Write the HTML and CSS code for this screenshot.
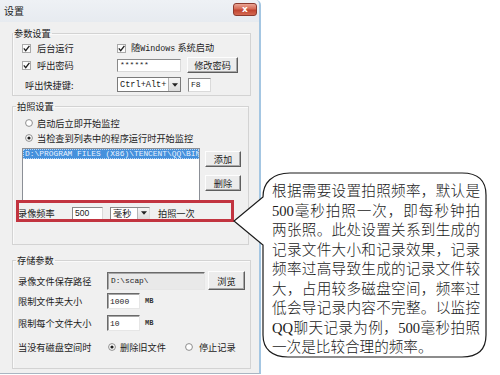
FILE: index.html
```html
<!DOCTYPE html>
<html>
<head>
<meta charset="utf-8">
<link rel="stylesheet" href="styles.css">
</head>
<body>
<div class="page">
  <div class="window">
    <div class="titlebar">
      <span class="title">设置</span>
      <span class="close">x</span>
    </div>

    <fieldset class="group g1">
      <legend>参数设置</legend>
      <div class="inner">
        <div class="row r1">
          <div class="c1"><svg class="chk" viewBox="0 0 9 9"><rect x="0.5" y="0.5" width="8" height="8" fill="#fbfbfb" stroke="#a9a9a9"/><path d="M1.8 4.4 L3.7 6.6 L7.4 1.8" fill="none" stroke="#1e1e1e" stroke-width="1.3"/></svg><span>后台运行</span></div>
          <div class="c2"><svg class="chk" viewBox="0 0 9 9"><rect x="0.5" y="0.5" width="8" height="8" fill="#fbfbfb" stroke="#a9a9a9"/><path d="M1.8 4.4 L3.7 6.6 L7.4 1.8" fill="none" stroke="#1e1e1e" stroke-width="1.3"/></svg><span>随<span class="mono win">Windows</span> 系统启动</span></div>
        </div>
        <div class="row r2">
          <div class="c1"><svg class="chk" viewBox="0 0 9 9"><rect x="0.5" y="0.5" width="8" height="8" fill="#fbfbfb" stroke="#a9a9a9"/><path d="M1.8 4.4 L3.7 6.6 L7.4 1.8" fill="none" stroke="#1e1e1e" stroke-width="1.3"/></svg><span>呼出密码</span></div>
          <div class="field pw mono">******</div>
          <div class="btn btn-mod">修改密码</div>
        </div>
        <div class="row r3">
          <div class="c1 lbl-key">呼出快捷键:</div>
          <div class="combo cb-key"><span class="mono">Ctrl+Alt+</span><span class="arrow"><svg viewBox="0 0 7 4"><path d="M0 0 H7 L3.5 4 Z" fill="#222"/></svg></span></div>
          <div class="field f8 mono">F8</div>
        </div>
      </div>
    </fieldset>

    <fieldset class="group g2">
      <legend>拍照设置</legend>
      <div class="inner">
        <div class="row rr1"><svg class="rad" viewBox="0 0 8 8"><circle cx="4" cy="4" r="3.4" fill="#fff" stroke="#8d8d8d"/></svg><span>启动后立即开始监控</span></div>
        <div class="row rr2"><svg class="rad" viewBox="0 0 8 8"><circle cx="4" cy="4" r="3.4" fill="#fff" stroke="#8d8d8d"/><circle cx="4" cy="4" r="1.6" fill="#1e1e1e"/></svg><span>当检查到列表中的程序运行时开始监控</span></div>
        <div class="listrow">
          <div class="list">
            <div class="sel mono">D:\PROGRAM FILES (X86)\TENCENT\QQ\BIN</div>
          </div>
          <div class="listbtns">
            <div class="btn btn-add">添加</div>
            <div class="btn btn-del">删除</div>
          </div>
        </div>
        <div class="row freq">
          <div class="lbl-freq">录像频率</div>
          <div class="field v500">500</div>
          <div class="combo cb-ms"><span>毫秒</span><span class="arrow"><svg viewBox="0 0 7 4"><path d="M0 0 H7 L3.5 4 Z" fill="#222"/></svg></span></div>
          <div class="once">拍照一次</div>
        </div>
      </div>
    </fieldset>

    <fieldset class="group g3">
      <legend>存储参数</legend>
      <div class="inner">
        <div class="row s1">
          <div class="lbl3">录像文件保存路径</div>
          <div class="field sunken path mono">D:\scap\</div>
          <div class="btn btn-browse">浏览</div>
        </div>
        <div class="row s2">
          <div class="lbl3">限制文件夹大小</div>
          <div class="field sunken num mono">1000</div>
          <div class="mb mono">MB</div>
        </div>
        <div class="row s3">
          <div class="lbl3">限制每个文件大小</div>
          <div class="field sunken num mono">10</div>
          <div class="mb mono">MB</div>
        </div>
        <div class="row s4">
          <div class="lbl3">当没有磁盘空间时</div>
          <svg class="rad rad-del" viewBox="0 0 8 8"><circle cx="4" cy="4" r="3.4" fill="#fff" stroke="#8d8d8d"/><circle cx="4" cy="4" r="1.6" fill="#1e1e1e"/></svg><span>删除旧文件</span>
          <svg class="rad rad-stop" viewBox="0 0 8 8"><circle cx="4" cy="4" r="3.4" fill="#fff" stroke="#8d8d8d"/></svg><span>停止记录</span>
        </div>
      </div>
    </fieldset>
  </div>

  <svg class="overlay" width="500" height="375" viewBox="0 0 500 375">
    <rect x="17.5" y="201.5" width="215" height="19" fill="none" stroke="#c23440" stroke-width="3"/>
    <path d="M263 197 C263 183 272 173 290 173 L462 173 C478 173 486 181 486 195 L486 335 C486 349 478 357 462 357 L288 357 C272 357 263 349 263 335 L263 245 L234 221 Z" fill="#fff" stroke="#1a1a1a" stroke-width="1.2"/>
  </svg>

  <div class="note">
    <div class="ln">根据需要设置拍照频率，默认是</div>
    <div class="ln">500毫秒拍照一次，即每秒钟拍</div>
    <div class="ln">两张照。此处设置关系到生成的</div>
    <div class="ln">记录文件大小和记录效果，记录</div>
    <div class="ln">频率过高导致生成的记录文件较</div>
    <div class="ln">大，占用较多磁盘空间，频率过</div>
    <div class="ln">低会导记录内容不完整。以监控</div>
    <div class="ln">QQ聊天记录为例，500毫秒拍照</div>
    <div class="ln last">一次是比较合理的频率。</div>
  </div>
</div>
</body>
</html>
```

FILE: styles.css
```css
html, body {
  margin: 0;
  padding: 0;
  background: #ffffff;
}

.page {
  position: relative;
  width: 500px;
  height: 375px;
  overflow: hidden;
  font-family: "Noto Sans CJK SC", sans-serif;
  font-size: 9.2px;
  line-height: 12px;
  color: #1c1c1c;
}

.mono {
  font-family: "Liberation Mono", "Noto Sans CJK SC", monospace;
}

.window {
  width: 261px;
  height: 374px;
  box-sizing: border-box;
  background: #f0f0f0;
  border-right: 2px solid #a4c6e2;
  border-bottom: 1px solid #a9b6c2;
  border-top-right-radius: 5px;
  display: flex;
  flex-direction: column;
}

.titlebar {
  height: 22px;
  flex: none;
  display: flex;
  align-items: center;
  padding: 0 2px 0 4px;
  background: linear-gradient(#eef1f5, #e7ebf0);
  border-top-right-radius: 5px;
}

.title {
  font-size: 10px;
  color: #222;
  margin-top: -1px;
}

.close {
  margin-left: auto;
  margin-top: -4px;
  width: 24px;
  height: 13px;
  box-sizing: border-box;
  border: 1px solid #8c3a2e;
  border-radius: 3px;
  background: linear-gradient(#eaa595, #d56a55 45%, #c0432f 55%, #d46a52);
  color: #fff;
  font-family: "DejaVu Sans", sans-serif;
  font-weight: bold;
  font-size: 9px;
  line-height: 10px;
  text-align: center;
}

/* group boxes */
.group {
  margin: 0 0 0 12px;
  padding: 0;
  border: 1px solid #d3d3d3;
  box-shadow: 1px 1px 0 #fafafa inset;
  min-width: 0;
  box-sizing: border-box;
}

.group legend {
  padding: 0 1px;
  margin-left: 2px;
  font-size: 9.2px;
  line-height: 12px;
}

.inner {
  display: flex;
  flex-direction: column;
}

.row {
  display: flex;
  align-items: center;
  flex: none;
}

.g1 {
  width: 239px;
  margin-top: 5px;
}
.g1 .inner {
  padding: 0 0 3px 9px;
}
.g1 legend { margin-left: 0; }

.c1 {
  width: 95px;
  display: flex;
  align-items: center;
}
.c2 {
  display: flex;
  align-items: center;
}
.chk {
  width: 9px;
  height: 9px;
  flex: none;
  margin-right: 6px;
}
.c2 .chk { margin-right: 5px; }
.win { font-size: 8.4px; }

.r1 { height: 16px; margin-top: 1px; }
.r2 { height: 16px; margin-top: 1px; }
.r3 { height: 15px; margin-top: 4px; }

.lbl-key { padding-left: 3px; box-sizing: border-box; }

.field {
  box-sizing: border-box;
  background: #fff;
  border: 1px solid;
  border-color: #8a8a8a #dadada #dadada #8a8a8a;
  display: flex;
  align-items: center;
  padding-left: 2px;
  overflow: hidden;
  white-space: nowrap;
}
.pw { width: 64px; height: 13px; font-size: 8px; letter-spacing: 0; }
.f8 { width: 23px; height: 14px; margin-left: 7px; font-size: 8px; }

.combo {
  box-sizing: border-box;
  background: #fff;
  border: 1px solid #7a7a7a;
  display: flex;
  align-items: center;
  padding-left: 2px;
  white-space: nowrap;
}
.combo .arrow {
  margin-left: auto;
  width: 12px;
  align-self: stretch;
  box-sizing: border-box;
  border-left: 1px solid #b5b5b5;
  background: linear-gradient(#f6f6f6, #dcdcdc);
  display: flex;
  align-items: center;
  justify-content: center;
}
.combo .arrow svg { width: 6px; height: 4px; }
.cb-key { width: 64px; height: 15px; font-size: 8.6px; }

.btn {
  box-sizing: border-box;
  display: flex;
  align-items: center;
  justify-content: center;
  background: #ececec;
  border: 1px solid;
  border-color: #fdfdfd #5e5e5e #5e5e5e #fdfdfd;
  box-shadow: inset -1px -1px 0 #a8a8a8;
  white-space: nowrap;
}
.btn-mod { width: 51px; height: 16px; margin-left: 6px; }

/* group 2 */
.g2 {
  width: 237px;
  margin-top: 4px;
}
.g2 legend { margin-left: 3px; }
.g2 .inner {
  padding: 0 0 24px 9px;
}
.rad {
  width: 8px;
  height: 8px;
  flex: none;
}
.rr1, .rr2 { height: 14px; }
.rr1 { margin-top: 4px; }
.rr2 { margin-top: 1px; }
.rr1 .rad, .rr2 .rad { margin: 0 4px 0 3px; }

.listrow {
  display: flex;
  margin-top: 3px;
}
.list {
  width: 178px;
  height: 53px;
  box-sizing: border-box;
  background: #fff;
  border: 1px solid #8b8f96;
  overflow: hidden;
}
.sel {
  height: 10px;
  background: #4590dc;
  color: #e8f2ff;
  font-size: 7.9px;
  line-height: 10px;
  padding-left: 2px;
  white-space: nowrap;
  overflow: hidden;
  outline: 1px dotted #b9d6f3;
  outline-offset: -1px;
}
.listbtns {
  display: flex;
  flex-direction: column;
  margin-left: 5px;
}
.btn-add { width: 36px; height: 16px; margin-top: 3px; }
.btn-del { width: 36px; height: 16px; margin-top: 8px; }

.freq { height: 14px; margin-top: 5px; }
.lbl-freq { width: 54px; margin-left: -4px; flex: none; }
.v500 {
  width: 31px;
  height: 13px;
  font-family: "Liberation Sans", sans-serif;
  font-size: 8.5px;
}
.cb-ms {
  width: 40px;
  height: 13px;
  margin-left: 7px;
  border-color: #8a8a8a #dadada #dadada #8a8a8a;
}
.once { margin-left: 8px; }

/* group 3 */
.g3 {
  width: 239px;
  margin-top: 9px;
}
.g3 legend { margin-left: 3px; }
.g3 .inner {
  padding: 0 0 13px 5px;
}
.lbl3 { width: 89px; flex: none; }
.sunken {
  border-color: #6a6a6a #e6e6e6 #e6e6e6 #6a6a6a;
  box-shadow: inset 1px 1px 0 #a6a6a6;
}
.s1 { height: 19px; margin-top: 5px; }
.s2 { height: 16px; margin-top: 3px; }
.s3 { height: 16px; margin-top: 6px; }
.s4 { height: 16px; margin-top: 8px; }
.path {
  width: 98px;
  height: 18px;
  background: #e9e9e9;
  font-size: 7.8px;
  padding-left: 3px;
  align-items: flex-start;
  padding-top: 2px;
}
.btn-browse { width: 37px; height: 19px; margin-left: 3px; }
.num {
  width: 33px;
  height: 16px;
  font-size: 8px;
  align-items: flex-start;
  padding-top: 2px;
}
.mb {
  margin-left: 5px;
  font-size: 7px;
  font-weight: bold;
  color: #333;
}
.rad-del { margin: 0 4px 0 1px; }
.rad-stop { margin: 0 6px 0 19px; }

/* annotation */
.overlay {
  position: absolute;
  left: 0;
  top: 0;
}

.note {
  position: absolute;
  left: 272px;
  top: 182px;
  width: 208px;
  font-family: "Liberation Serif", "Noto Sans CJK SC", serif;
  font-size: 14.6px;
  font-weight: 300;
  line-height: 19.5px;
  color: #1a1a1a;
}
.ln {
  white-space: nowrap;
  text-align: justify;
  text-align-last: justify;
  height: 19.5px;
}
.ln.last {
  text-align-last: left;
}
```
